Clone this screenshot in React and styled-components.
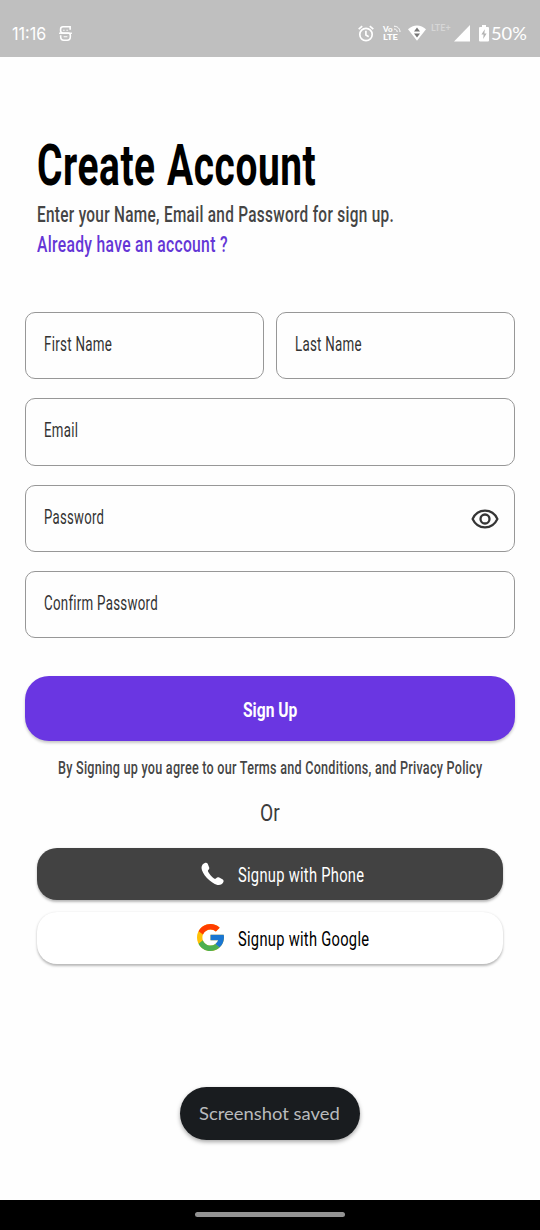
import React, { useLayoutEffect, useRef, useState } from "react";
import styled, { createGlobalStyle } from "styled-components";

const GlobalStyle = createGlobalStyle`
  *, *::before, *::after { box-sizing: border-box; }
  body { margin: 0; background: #fff; }
  button { border: 0; padding: 0; margin: 0; cursor: pointer; }
  svg { display: block; flex: none; }
`;

const condensed = `Roboto, "Liberation Sans", sans-serif`;
const rounded = `Lato, "Open Sans", sans-serif`;

/* Text squeezed horizontally to a given measure */
const Measure = styled.span`
  display: block;
  flex: none;
  width: ${(p) => p.$width}px;
  white-space: nowrap;
`;
const Glyphs = styled.span`
  display: inline-block;
  transform-origin: 0 50%;
`;
function Fit({ width, children }) {
  const ref = useRef(null);
  const [scale, setScale] = useState(1);
  useLayoutEffect(() => {
    setScale(width / ref.current.offsetWidth);
  }, [width, children]);
  return (
    <Measure $width={width}>
      <Glyphs ref={ref} style={{ transform: `scaleX(${scale})` }}>{children}</Glyphs>
    </Measure>
  );
}

const Screen = styled.div`
  width: 540px;
  height: 1230px;
  display: flex;
  flex-direction: column;
  background: #fefefe;
  font-family: ${condensed};
  color: #3c3c3c;
  overflow: hidden;
`;

const StatusBar = styled.header`
  height: 57px;
  flex: none;
  display: flex;
  align-items: center;
  padding: 9px 13.5px 0 12px;
  background: #bfbfbf;
  color: #fff;
  font-family: ${rounded};
`;
const StatusText = styled.div`
  font-size: 17.5px;
  line-height: 24px;
  padding-top: 1px;
`;
const Clock = styled(StatusText)`
  font-family: Inter, sans-serif;
  font-size: 17px;
`;
const StatusIcons = styled.div`
  display: flex;
  align-items: center;
  margin-left: auto;
`;
const NotificationIcon = styled.div`
  margin-left: 13px;
`;
const Volte = styled.div`
  margin-left: 9px;
  width: 18px;
  font-size: 8px;
  font-weight: 900;
  line-height: 8px;
`;
const VolteTop = styled.div`
  display: flex;
  gap: 1px;
`;
const Wifi = styled.div`
  margin-left: 7px;
`;
const Network = styled.div`
  margin: 0 3px 10px 5px;
  font-size: 9px;
  line-height: 8px;
  font-weight: 700;
  color: #d6d6d6;
`;
const Battery = styled.div`
  margin: 0 2px 0 9px;
`;

const Main = styled.main`
  flex: 1;
  display: flex;
  flex-direction: column;
  padding: 79px 25px 0;
`;
const Intro = styled.section`
  padding-left: 12px;
`;
const Title = styled.h1`
  margin: 0 0 4px;
  font-size: 57.5px;
  line-height: 60px;
  font-weight: 700;
  letter-spacing: 0.015em;
  word-spacing: 0.03em;
  color: #000;
`;
const Lead = styled.p`
  margin: 0;
  font-size: 21.5px;
  line-height: 30px;
  font-weight: 500;
  letter-spacing: 0.02em;
  color: #454545;
`;
const LoginLink = styled.a`
  display: block;
  font-size: 21.5px;
  line-height: 30px;
  font-weight: 500;
  letter-spacing: 0.02em;
  color: #6436d6;
`;

const Form = styled.form`
  margin-top: 52px;
  display: flex;
  flex-direction: column;
  gap: 19px;
`;
const NameRow = styled.div`
  display: grid;
  grid-template-columns: 1fr 1fr;
  gap: 12px;
`;
const Field = styled.label`
  height: 67.3px;
  display: flex;
  align-items: center;
  justify-content: space-between;
  padding: 1px 15px 0 18px;
  border: 1px solid #979797;
  border-radius: 10px;
  font-size: 19.5px;
  line-height: 24px;
  letter-spacing: 0.02em;
  color: #333;
`;
const FieldLabel = styled.span`
  padding-bottom: 2px;
`;

const SubmitButton = styled.button`
  height: 65px;
  margin-top: 18.5px;
  display: flex;
  align-items: center;
  justify-content: center;
  padding: 3px 1px 0 0;
  border-radius: 24px;
  background: #6a36e2;
  box-shadow: 0 2px 3px rgba(0, 0, 0, 0.22);
  color: #fff;
  font: 700 20.5px/26px ${condensed};
`;
const Terms = styled.p`
  margin: 15px 0 0;
  display: flex;
  justify-content: center;
  font-size: 17.5px;
  line-height: 24px;
  font-weight: 500;
  letter-spacing: 0.02em;
  color: #454545;
`;
const Or = styled.div`
  margin-top: 18px;
  display: flex;
  justify-content: center;
  font-size: 24px;
  line-height: 30px;
`;
const Providers = styled.div`
  margin: 20.5px 12px 0;
  display: flex;
  flex-direction: column;
  gap: 12.5px;
`;
const ProviderButton = styled.button`
  height: 51.5px;
  display: flex;
  align-items: center;
  justify-content: center;
  gap: 14px;
  padding-left: 25px;
  border-radius: 20px;
  background: ${(p) => (p.$dark ? "#424242" : "#fff")};
  color: ${(p) => (p.$dark ? "#fff" : "#000")};
  box-shadow: 0 1.5px 2.5px rgba(0, 0, 0, 0.28);
  font: 400 20.5px/26px ${condensed};
  letter-spacing: 0.02em;
`;
const ProviderLabel = styled.span`
  padding-top: 3px;
`;

const Toast = styled.div`
  align-self: center;
  margin: auto 1px 60px 0;
  width: 180px;
  height: 53px;
  display: flex;
  align-items: center;
  justify-content: center;
  padding-top: 1px;
  border-radius: 27px;
  background: #191c1f;
  box-shadow: 0 2px 4px rgba(0, 0, 0, 0.35);
  color: #b9bbbd;
  font: 400 17.5px/24px ${rounded};
`;
const NavBar = styled.footer`
  height: 30px;
  flex: none;
  display: flex;
  align-items: center;
  justify-content: center;
  padding-bottom: 1px;
  background: #000;
`;
const NavHandle = styled.div`
  width: 150px;
  height: 5px;
  border-radius: 3px;
  background: #929292;
`;

const CapsuleIcon = () => (
  <svg width="13" height="17" viewBox="0 0 14 17" fill="none" stroke="#fff" strokeWidth="1.7">
    <path d="M12 4.5V1.2H4.3C2.6 1.2 1.7 2.2 1.7 3.8V5.2C1.7 7 2.8 8 4.2 8H9.8C11.4 8 12.2 9 12.2 10.6V12C12.2 14.2 10.8 15.7 8.8 15.7H5.2C3.2 15.7 1.8 14.2 1.8 12V10.5" />
    <path d="M0 8.2h14" strokeWidth="1.4" />
    <path d="M4.5 5h1.5M8 5h1.5M5 12h4" strokeWidth="1.2" />
  </svg>
);
const AlarmIcon = () => (
  <svg width="16" height="17" viewBox="0 0 16 17" fill="none" stroke="#fff" strokeWidth="1.7">
    <circle cx="8" cy="9.5" r="6.2" />
    <path d="M7.9 5.8V10l2.8 1.7M.7 4.1 4.2 1.1M15.3 4.1 11.8 1.1" />
  </svg>
);
const WavesIcon = () => (
  <svg width="7" height="7" viewBox="0 0 7 7" fill="none" stroke="#fff" strokeWidth="1">
    <path d="M0 1.2C3.4 1.2 6 3.6 6 7M0 4C2 4 3.2 5.2 3.2 7" />
  </svg>
);
const WifiIcon = () => (
  <svg width="18" height="16" viewBox="0 0 18 16">
    <path d="M0 4.3C5.2-.9 12.8-.9 18 4.3L9 15.8Z" fill="#fff" />
    <path d="M9 2.5 12 6.4H6ZM6 8.5h6L9 12.5Z" fill="#777" />
  </svg>
);
const SignalIcon = () => (
  <svg width="16" height="17" viewBox="0 0 16 17"><path d="M16 0V16.5H0Z" fill="#fff" /></svg>
);
const BatteryIcon = () => (
  <svg width="10" height="17" viewBox="0 0 10 17">
    <path d="M3 0h4v2h2q1 0 1 1v12.5q0 1-1 1H1q-1 0-1-1V3q0-1 1-1h2Z" fill="#fff" />
    <path d="M5.8 4.3 2.4 9.6H4.6L4.2 14 7.6 8.6H5.4Z" fill="#b3b3b3" />
  </svg>
);
const EyeIcon = () => (
  <svg width="28" height="20" viewBox="0 0 28 20" fill="none" stroke="#353535">
    <path d="M1.6 10C4 4.8 8.5 1.7 14 1.7S24 4.8 26.4 10C24 15.2 19.5 18.3 14 18.3S4 15.2 1.6 10Z" strokeWidth="2.2" strokeLinejoin="round" />
    <circle cx="14" cy="10" r="4.5" strokeWidth="2.3" />
  </svg>
);
const PhoneIcon = () => (
  <svg width="23" height="24" viewBox="0 0 23 24">
    <path d="M4.4.7C2.2 1.2.4 3.4.5 6.1C.8 11.8 9.4 21.4 16.5 22.9C19 23.4 21.5 22.3 22.4 20C22.9 18.8 22.5 17.8 21.4 17.2L18.2 15.6C17 15 16 15.3 15.2 16.2C14.4 17 13.7 17 12.7 16.2C10.7 14.8 8.7 12.4 7.3 10.1C6.7 9.1 6.8 8.4 7.5 7.8C8.4 7 8.5 6.1 8 4.9L6.7 1.8C6.2.8 5.4.5 4.4.7Z" fill="#fff" />
  </svg>
);
const GoogleIcon = () => (
  <svg width="27" height="27" viewBox="4 4 40 40">
    <path fill="#FFC107" d="M43.611 20.083H42V20H24v8h11.303c-1.649 4.657-6.08 8-11.303 8-6.627 0-12-5.373-12-12s5.373-12 12-12c3.059 0 5.842 1.154 7.961 3.039l5.657-5.657C34.046 6.053 29.268 4 24 4 12.955 4 4 12.955 4 24s8.955 20 20 20 20-8.955 20-20c0-1.341-.138-2.65-.389-3.917z" />
    <path fill="#FF3D00" d="m6.306 14.691 6.571 4.819C14.655 15.108 18.961 12 24 12c3.059 0 5.842 1.154 7.961 3.039l5.657-5.657C34.046 6.053 29.268 4 24 4 16.318 4 9.656 8.337 6.306 14.691z" />
    <path fill="#4CAF50" d="M24 44c5.166 0 9.86-1.977 13.409-5.192l-6.19-5.238A11.91 11.91 0 0 1 24 36c-5.202 0-9.619-3.317-11.283-7.946l-6.522 5.025C9.505 39.556 16.227 44 24 44z" />
    <path fill="#1976D2" d="M43.611 20.083H42V20H24v8h11.303a12.04 12.04 0 0 1-4.087 5.571l6.193 5.238C36.971 39.205 44 34 44 24c0-1.341-.138-2.65-.389-3.917z" />
  </svg>
);

function TextField({ label, width, children }) {
  return (
    <Field>
      <FieldLabel><Fit width={width}>{label}</Fit></FieldLabel>
      {children}
    </Field>
  );
}

export default function App() {
  return (
    <Screen>
      <GlobalStyle />
      <StatusBar>
        <Clock><Fit width={34}>11:16</Fit></Clock>
        <NotificationIcon><CapsuleIcon /></NotificationIcon>
        <StatusIcons>
          <AlarmIcon />
          <Volte>
            <VolteTop><Fit width={10}>Vo</Fit><WavesIcon /></VolteTop>
            <Fit width={15}>LTE</Fit>
          </Volte>
          <Wifi><WifiIcon /></Wifi>
          <Network><Fit width={20}>LTE+</Fit></Network>
          <SignalIcon />
          <Battery><BatteryIcon /></Battery>
          <StatusText><Fit width={35.5}>50%</Fit></StatusText>
        </StatusIcons>
      </StatusBar>

      <Main>
        <Intro>
          <Title><Fit width={279}>Create Account</Fit></Title>
          <Lead><Fit width={357}>Enter your Name, Email and Password for sign up.</Fit></Lead>
          <LoginLink><Fit width={191}>Already have an account ?</Fit></LoginLink>
        </Intro>

        <Form>
          <NameRow>
            <TextField label="First Name" width={68} />
            <TextField label="Last Name" width={67} />
          </NameRow>
          <TextField label="Email" width={34} />
          <TextField label="Password" width={60}><EyeIcon /></TextField>
          <TextField label="Confirm Password" width={114} />
          <SubmitButton type="button"><Fit width={54}>Sign Up</Fit></SubmitButton>
        </Form>

        <Terms><Fit width={424}>By Signing up you agree to our Terms and Conditions, and Privacy Policy</Fit></Terms>
        <Or><Fit width={20}>Or</Fit></Or>

        <Providers>
          <ProviderButton type="button" $dark>
            <PhoneIcon />
            <ProviderLabel><Fit width={126}>Signup with Phone</Fit></ProviderLabel>
          </ProviderButton>
          <ProviderButton type="button">
            <GoogleIcon />
            <ProviderLabel><Fit width={131}>Signup with Google</Fit></ProviderLabel>
          </ProviderButton>
        </Providers>

        <Toast><Fit width={141}>Screenshot saved</Fit></Toast>
      </Main>

      <NavBar><NavHandle /></NavBar>
    </Screen>
  );
}
